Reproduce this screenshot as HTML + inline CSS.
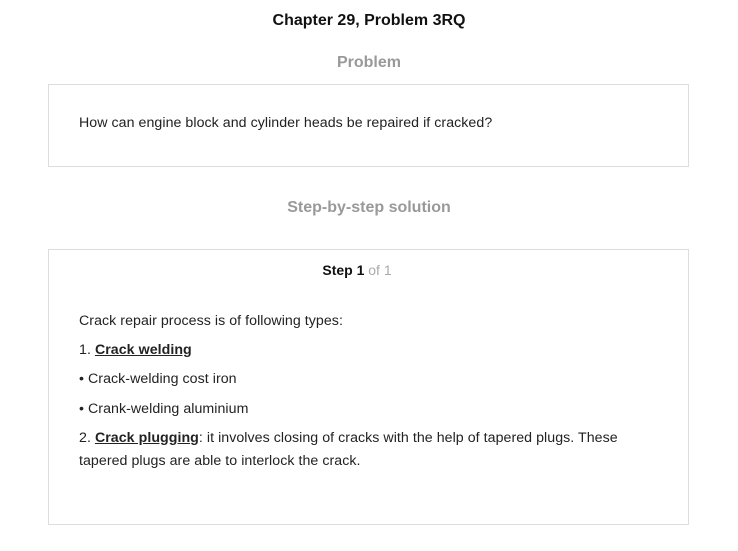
<!DOCTYPE html>
<html><head><style>
body{margin:0;background:#fff;font-family:"Liberation Sans",Arial,sans-serif;color:#222;width:738px;height:551px;overflow:hidden;position:relative}
.t{position:absolute;left:0;width:738px;text-align:center;font-weight:bold}
.box{position:absolute;left:48px;width:639px;border:1px solid #ddd}
p{position:absolute;left:79px;margin:0;font-size:14.2px;line-height:23px;width:550px;letter-spacing:0.05px}
u{font-weight:bold}
</style></head><body>
<div class="t" style="top:12px;font-size:16px;color:#111">Chapter 29, Problem 3RQ</div>
<div class="t" style="top:54px;font-size:16px;color:#999">Problem</div>
<div class="box" style="top:84px;height:81px"></div>
<p style="top:112px">How can engine block and cylinder heads be repaired if cracked?</p>
<div class="t" style="top:199px;font-size:16px;color:#999">Step-by-step solution</div>
<div class="box" style="top:249px;height:274px"></div>
<div class="t" style="top:262px;font-size:14px;color:#111;left:-12px">Step 1 <span style="font-weight:normal;color:#aaa">of 1</span></div>
<p style="top:310px">Crack repair process is of following types:</p>
<p style="top:339px">1. <u>Crack welding</u></p>
<p style="top:368px">• Crack-welding cost iron</p>
<p style="top:398px">• Crank-welding aluminium</p>
<p style="top:427px">2. <u>Crack plugging</u>: it involves closing of cracks with the help of tapered plugs. These tapered plugs are able to interlock the crack.</p>
</body></html>
